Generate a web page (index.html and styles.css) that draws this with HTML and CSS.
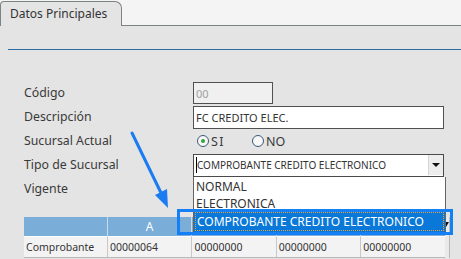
FILE: index.html
```html
<!DOCTYPE html>
<html lang="es">
<head>
    <meta charset="UTF-8">
    <title>Datos Principales</title>
    <link rel="stylesheet" href="styles.css">
</head>
<body>
    <!-- pestañas -->
    <div class="tabbar">
        <div class="tab">Datos Principales</div>
        <div class="tabbar-fill"></div>
    </div>

    <div class="panel">
        <div class="section">
            <div class="form">
                <label>Código</label>
                <div><input class="input input-short" value="00" disabled></div>

                <label>Descripción</label>
                <div><input class="input input-long" value="FC CREDITO ELEC."></div>

                <label>Sucursal Actual</label>
                <div class="radios">
                    <span class="radio checked"></span><span class="radio-text si">SI</span>
                    <span class="radio"></span><span class="radio-text">NO</span>
                </div>

                <label>Tipo de Sucursal</label>
                <div class="select">
                    <span class="select-value"><span class="caret"></span>COMPROBANTE CREDITO ELECTRONICO</span>
                    <span class="select-btn"><span class="arrow-down"></span></span>
                </div>

                <label>Vigente</label>
                <div></div>
            </div>

            <div class="grid-wrap">
                <table class="grid">
                    <tr>
                        <th></th>
                        <th>A</th>
                        <th></th>
                        <th></th>
                        <th></th>
                    </tr>
                    <tr>
                        <td>Comprobante</td>
                        <td>00000064</td>
                        <td>00000000</td>
                        <td>00000000</td>
                        <td>00000000</td>
                    </tr>
                </table>
            </div>
        </div>

        <!-- lista desplegada -->
        <ul class="dropdown">
            <li>NORMAL</li>
            <li>ELECTRONICA</li>
            <li class="selected"><span>COMPROBANTE CREDITO ELECTRONICO</span></li>
        </ul>
        <span class="pointer"></span>

        <!-- anotaciones -->
        <div class="highlight"></div>
        <svg class="note-arrow" width="461" height="259" viewBox="0 0 461 259">
            <line x1="132" y1="133" x2="163" y2="197" stroke="#1b7cf2" stroke-width="3" stroke-linecap="round"/>
            <polygon points="168,208 155,195 167,189" fill="#1b7cf2"/>
        </svg>
    </div>
</body>
</html>
```

FILE: styles.css
```css
body {
    margin: 0;
    font-family: "Noto Sans", Arial, sans-serif;
    font-size: 12px;
    color: #3a3a3a;
    background-color: #e4e4e4;
    height: 259px;
    overflow: hidden;
}

.tabbar {
    display: flex;
    height: 26px;
    background-color: #f4f4f4;
}

.tab {
    box-sizing: border-box;
    width: 122px;
    height: 25px;
    margin-top: 1px;
    padding: 3px 0 0 9px;
    background-color: #e4e4e4;
    border: 1px solid #7d8285;
    border-bottom: none;
    border-radius: 4px 7px 0 0;
    color: #333;
}

.tabbar-fill {
    flex: 1;
    border-bottom: 1px solid #7d8285;
}

.panel {
    position: relative;
    padding: 23px 0 0 8px;
}

.section {
    border-top: 1px solid #2d6da3;
    padding: 32px 0 0 16px;
}

.form {
    display: grid;
    grid-template-columns: 169px 260px;
    grid-auto-rows: 22px;
    row-gap: 2px;
    align-items: center;
}

.form label {
    line-height: 22px;
    font-size: 12.3px;
}

.input {
    box-sizing: border-box;
    height: 22px;
    margin: 0;
    padding: 0 2px;
    border: 1px solid #505050;
    border-radius: 0;
    font-family: "Noto Sans", Arial, sans-serif;
    font-size: 11px;
    color: #333;
    background-color: #fff;
    display: block;
}

.input-short {
    width: 80px;
    background-color: #f0f0f0;
    color: #a0a0a0;
}

.input-long {
    width: 251px;
    height: 23px;
}

.radios {
    display: flex;
    align-items: center;
    padding-left: 4px;
}

.radio {
    box-sizing: border-box;
    width: 12px;
    height: 12px;
    border: 1px solid #3a5878;
    border-radius: 50%;
    background-color: #f7f7f7;
    display: flex;
    justify-content: center;
    align-items: center;
}

.radio.checked::after {
    content: "";
    width: 4px;
    height: 4px;
    border-radius: 50%;
    background-color: #34a33c;
}

.radio-text {
    margin-left: 2px;
    margin-right: 27px;
    font-size: 12.5px;
}

.radio-text.si {
    letter-spacing: 1.5px;
}

.select {
    box-sizing: border-box;
    width: 251px;
    height: 23px;
    display: flex;
    border: 1px solid #4a4a4a;
    background-color: #fff;
}

.select-value {
    flex: 1;
    display: flex;
    align-items: center;
    padding-left: 2px;
    font-size: 10px;
    color: #333;
}

.caret {
    display: inline-block;
    width: 0;
    height: 16px;
    border-left: 1px solid #000;
}

.select-btn {
    width: 14px;
    margin: 0 0 1px 0;
    background-color: #ededed;
    border-left: 1px solid #d6d6d6;
    display: flex;
    justify-content: center;
    align-items: center;
}

.arrow-down {
    width: 0;
    height: 0;
    border-left: 4px solid transparent;
    border-right: 4px solid transparent;
    border-top: 4px solid #111;
}

.grid-wrap {
    margin-top: 17px;
    width: 425px;
    border-right: 1px solid #b9b9b9;
    background-color: #eaeaea;
}

.grid {
    border-collapse: collapse;
    table-layout: fixed;
    width: 421px;
    font-size: 10.5px;
}

.grid th {
    height: 19px;
    padding: 0;
    background-color: #7badd9;
    color: #fff;
    font-weight: normal;
    font-size: 12px;
    border-left: 1px solid #c9dcec;
}

.grid th:first-child,
.grid td:first-child {
    border-left: none;
    width: 83px;
}

.grid td {
    height: 20px;
    padding: 0 0 0 2px;
    background-color: #f3f3f3;
    border-left: 1px solid #c8c8c8;
    border-top: 1px solid #fff;
    border-bottom: 1px solid #b8b8b8;
    color: #333;
}

.dropdown {
    position: absolute;
    left: 193px;
    top: 151px;
    box-sizing: border-box;
    width: 253px;
    margin: 0;
    padding: 0;
    list-style: none;
    background-color: #fff;
    border: 1px solid #646464;
    border-top: none;
}

.dropdown li {
    height: 17px;
    line-height: 19px;
    padding-left: 2px;
    color: #333;
}

.dropdown li.selected {
    height: 21px;
    padding: 0;
    background-color: #0a78d8;
    color: #fff;
}

.dropdown li.selected span {
    display: block;
    box-sizing: border-box;
    height: 19px;
    line-height: 17px;
    margin: 1px;
    padding-left: 1px;
    border: 1px dotted #e8a23c;
}

.pointer {
    position: absolute;
    left: 446px;
    top: 196px;
    width: 0;
    height: 0;
    border-top: 5px solid #111;
    border-right: 3px solid transparent;
}

.highlight {
    position: absolute;
    left: 177px;
    top: 183px;
    width: 270px;
    height: 20px;
    border: 3px solid #1580f5;
}

.note-arrow {
    position: absolute;
    left: 0;
    top: -26px;
}
```
